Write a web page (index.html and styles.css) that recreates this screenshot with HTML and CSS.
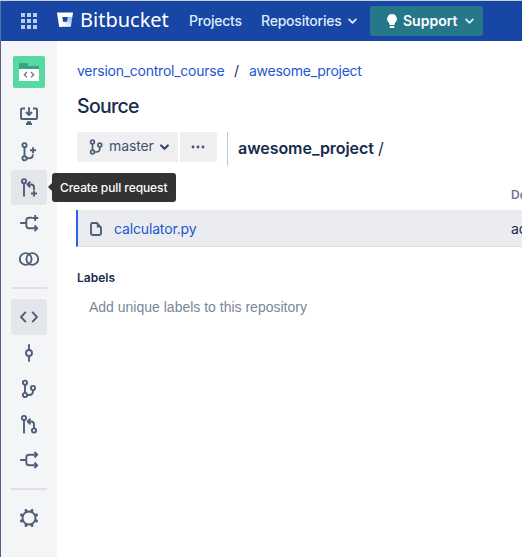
FILE: index.html
```html
<!DOCTYPE html>
<html lang="en">
<head>
<meta charset="utf-8">
<title>awesome_project — Bitbucket</title>
<link rel="stylesheet" href="styles.css">
</head>
<body>
<header class="topbar">
  <svg class="apps" viewBox="0 0 16 16"><path d="M0 0h4v4H0zM6 0h4v4H6zM12 0h4v4h-4zM0 6h4v4H0zM6 6h4v4H6zM12 6h4v4h-4zM0 12h4v4H0zM6 12h4v4H6zM12 12h4v4h-4z"/></svg>
  <svg class="bucket" viewBox="0 0 16 15">
    <defs><linearGradient id="fade" x1="1" y1="0.3" x2="0.4" y2="0.9"><stop offset="0" stop-color="#a9bfe9"/><stop offset="1" stop-color="#fff"/></linearGradient></defs>
    <path fill="#fff" d="M.5.5h15a.5.5 0 0 1 .5.6L15.400 5H5.300l.8 4.800L5 14.800H2.800a.7.7 0 0 1-.7-.6L0 1.100A.5.5 0 0 1 .5.500z"/>
    <path fill="url(#fade)" d="M15.400 5h-4.600L10 9.800H6.100L2.300 14.500l.5.3h10.500a.6.6 0 0 0 .6-.6z"/>
  </svg>
  <span class="brand">Bitbucket</span>
  <a class="nav projects">Projects</a>
  <a class="nav repos">Repositories</a>
  <svg class="chev nav-chev" viewBox="0 0 8 6"><path d="M1 1.200l3 3 3-3"/></svg>
  <button class="support">
    <svg class="bulb" viewBox="0 0 10 14"><path d="M5 0a4.900 4.900 0 0 0-2.900 8.800L2.600 11h4.800l.5-2.200A4.900 4.900 0 0 0 5 0zM2.700 12h4.600v1.200a.8.8 0 0 1-.8.8h-3a.8.8 0 0 1-.8-.8z"/></svg>
    <span class="support-text">Support</span>
    <svg class="chev" viewBox="0 0 8 6"><path d="M1 1.200l3 3 3-3"/></svg>
  </button>
</header>
<div class="shell">
  <nav class="sidebar">
    <svg class="avatar" viewBox="0 0 32 32">
      <rect width="32" height="32" rx="2" fill="#57d9a3"/>
      <path fill="#3ca37f" d="M6 8a1 1 0 0 1 1-1h7a1 1 0 0 1 1 1v2h11v4H6z"/>
      <path fill="#fff" d="M6 13h20v12H6z"/>
      <path fill="none" stroke="#66758f" stroke-width="1.300" d="M14 16l-2.700 2.700 2.700 2.700M18 16l2.700 2.700-2.700 2.700"/>
    </svg>
    <a class="item"><svg viewBox="0 0 24 24"><path d="M8 4.500H5a1 1 0 0 0-1 1V14a1 1 0 0 0 1 1h14a1 1 0 0 0 1-1V5.500a1 1 0 0 0-1-1h-3M12 3.200V11M9 8l3 3 3-3M10 18.200h4M9 20h6"/></svg></a>
    <a class="item"><svg viewBox="0 0 24 24"><circle cx="7.500" cy="5.200" r="2.100"/><circle cx="7.500" cy="18.300" r="2.100"/><path d="M7.500 7.300v9M9.600 18.300h2.400q3.600 0 4-4M16 7.300v6M13 10.300h6"/></svg></a>
    <a class="item short active"><svg viewBox="0 0 24 24"><circle cx="7" cy="5.200" r="2.100"/><path d="M7 7.300v13.200M11 8.500h3q3 0 3 3v2.500M13.200 5.700l-2.800 2.800 2.800 2.800M17 14.500v6M14 17.500h6"/></svg></a>
    <a class="item"><svg viewBox="0 0 24 24"><path d="M3.200 12H9M15 6.700h-3q-2.700 0-2.700 2.700v5.200q0 2.700 2.700 2.700h8M18.200 4v6M15.200 7h6M17.500 14.500l2.800 2.800-2.800 2.800"/></svg></a>
    <a class="item"><svg viewBox="0 0 24 24"><circle cx="8.700" cy="12" r="5.900"/><circle cx="15.300" cy="12" r="5.900"/></svg></a>
    <hr class="rule">
    <a class="item active"><svg viewBox="0 0 24 24"><path d="M8.800 6.800L4 12l4.800 5.200M15.200 6.800L20 12l-4.800 5.200"/></svg></a>
    <a class="item"><svg viewBox="0 0 24 24"><circle cx="12" cy="12" r="3"/><path d="M12 3.200V9M12 15v5.800"/></svg></a>
    <a class="item"><svg viewBox="0 0 24 24"><circle cx="8" cy="5.700" r="2.100"/><circle cx="8" cy="18" r="2.100"/><circle cx="16" cy="11" r="2.100"/><path d="M8 7.800V16M10 18h2q4 0 4-4v-1"/></svg></a>
    <a class="item short"><svg viewBox="0 0 24 24"><circle cx="7" cy="5" r="2.100"/><circle cx="17" cy="17.500" r="2.100"/><path d="M7 7v13.500M11 8.500h3q3 0 3 3v4M13.500 5.700l-2.800 2.800 2.800 2.800"/></svg></a>
    <a class="item"><svg viewBox="0 0 24 24"><path d="M3.200 12H9M20 6.700h-8q-2.700 0-2.700 2.700v5.200q0 2.700 2.700 2.700h8M17.500 3.900l2.800 2.800-2.800 2.800M17.500 14.500l2.800 2.800-2.800 2.800"/></svg></a>
    <hr class="rule">
    <a class="item"><svg viewBox="0 0 24 24"><circle cx="12" cy="12" r="6.500"/><path class="teeth" d="M14.700 5.300l.3-.8M18.700 9.300l.8-.3M18.700 14.700l.8.3M14.700 18.700l.3.800M9.300 18.700l-.3.800M5.300 14.700l-.8.3M5.300 9.300L4.500 9M9.300 5.300L9 4.500"/></svg></a>
    <div class="tooltip">Create pull request</div>
  </nav>
  <main class="content">
    <div class="crumbs"><a class="crumb-a">version_control_course</a><span class="slash">/</span><a class="crumb-b">awesome_project</a></div>
    <h1 class="title">Source</h1>
    <div class="tools">
      <button class="branch">
        <svg class="branch-icon" viewBox="0 0 14 16"><circle cx="3.500" cy="3" r="1.900"/><circle cx="3.500" cy="13" r="1.900"/><circle cx="10.800" cy="6" r="1.900"/><path d="M3.500 5v6M5.500 13h1.800q3.500 0 3.500-3.500V8"/></svg>
        <span class="branch-name">master</span>
        <svg class="chev dark" viewBox="0 0 8 6"><path d="M1 1.200l3 3 3-3"/></svg>
      </button>
      <button class="more"><svg viewBox="0 0 14 4"><circle cx="2" cy="2" r="1.400"/><circle cx="7" cy="2" r="1.400"/><circle cx="12" cy="2" r="1.400"/></svg></button>
      <div class="path"><b class="path-name">awesome_project</b><span>/</span></div>
    </div>
    <div class="table">
      <div class="row head"><span></span><span class="cell">Description</span></div>
      <div class="row file">
        <span class="name"><svg class="doc" viewBox="0 0 12 14"><path d="M7 1H2.500A1.500 1.500 0 0 0 1 2.500v9A1.500 1.500 0 0 0 2.500 13h7a1.500 1.500 0 0 0 1.500-1.500V5.500z"/><path class="fold" d="M6.800.500L11.500 5.500H6.800z"/></svg><a class="filename">calculator.py</a></span>
        <span class="cell">added</span>
      </div>
    </div>
    <h2 class="labels">Labels</h2>
    <p class="hint">Add unique labels to this repository</p>
  </main>
</div>
</body>
</html>
```
FILE: styles.css
```css
* { box-sizing: border-box; }
body {
  margin: 0;
  height: 557px;
  overflow: hidden;
  font-family: Inter, "Liberation Sans", sans-serif;
  font-size: 14px;
  line-height: 20px;
  color: #172b4d;
  background: #fff;
  border-top: 1px solid #cbd0d8;
}
svg { display: block; flex: none; }
button { font: inherit; border: 0; padding: 0; color: inherit; }
.topbar {
  height: 40px;
  display: flex;
  align-items: center;
  padding-left: 20px;
  border-left: 1px solid #5570ad;
  background: #1846a5;
  color: #deebff;
  white-space: nowrap;
}
.apps { width: 16px; height: 16px; fill: #b9cbee; }
.bucket { width: 16px; height: 15px; margin: 0 7px 3px 20px; }
.brand {
  width: 109px;
  font-family: "Noto Sans", sans-serif;
  font-size: 20px;
  color: #fff;
  margin-top: -3px;
}
.nav { font-weight: 500; letter-spacing: -0.22px; }
.projects { width: 72px; }
.repos { width: 87px; }
.chev { width: 9px; height: 7px; fill: none; stroke: #deebff; stroke-width: 1.600; stroke-linecap: round; stroke-linejoin: round; }
.support {
  display: flex;
  align-items: center;
  width: 113px;
  height: 30px;
  margin-left: 13px;
  padding-left: 17px;
  border-radius: 3px;
  background: #27778b;
  color: #fff;
  font-weight: 600;
}
.bulb { width: 10px; height: 14px; fill: #fff; margin-right: 6px; }
.support-text { width: 62px; text-align: left; }
.shell { display: flex; height: 516px; }
.sidebar {
  position: relative;
  width: 57px;
  padding: 15px 0 0 10px;
  border-left: 1px solid #55618d;
  background: #f4f5f7;
}
.avatar { width: 32px; height: 32px; margin: 0 0 10px 2px; }
.item {
  display: flex;
  align-items: center;
  justify-content: center;
  width: 36px;
  height: 36px;
  border-radius: 3px;
}
.item.short { height: 35px; }
.item.active { background: #e4e6ea; }
.item svg { width: 24px; height: 24px; fill: none; stroke: #505f79; stroke-width: 1.900; stroke-linejoin: round; }
.item .teeth { stroke-width: 3; stroke-linecap: round; }
.rule { width: 36px; height: 2px; margin: 10px 0; border: 0; background: #dfe1e6; }
.tooltip {
  position: absolute;
  left: 51px;
  top: 132px;
  width: 124px;
  height: 29px;
  padding-left: 8px;
  border-radius: 3px;
  background: #333;
  color: #fff;
  font-size: 12px;
  line-height: 29px;
  font-weight: 500;
  letter-spacing: -0.08px;
  white-space: nowrap;
}
.tooltip::before {
  content: "";
  position: absolute;
  left: -4px;
  top: 10px;
  border: 4px solid transparent;
  border-left: 0;
  border-right-color: #333;
}
.content { flex: 1; min-width: 0; padding: 20px 0 0 20px; }
.crumbs { display: flex; color: #2257cf; letter-spacing: -0.25px; }
.crumb-a { width: 157px; }
.slash { width: 15px; color: #172b4d; }
.title { margin: 13px 0 14px; font-size: 19.500px; line-height: 24px; font-weight: 500; letter-spacing: -0.700px; }
.tools { display: flex; height: 34px; }
.branch, .more { display: flex; align-items: center; height: 30px; background: #efeff1; color: #42526e; }
.branch { width: 101px; padding-left: 12px; border-radius: 3px 0 0 3px; }
.branch-icon { width: 14px; height: 16px; margin-right: 6px; fill: none; stroke: #505f79; stroke-width: 1.700; }
.branch-name { width: 51px; text-align: left; margin-top: -2px; letter-spacing: -0.1px; }
.chev.dark { stroke: #344563; stroke-width: 1.900; }
.more { width: 37px; margin-left: 2px; justify-content: center; border-radius: 0 3px 3px 0; }
.more svg { width: 14px; height: 4px; fill: #42526e; margin: 0 2px 1px 0; }
.path {
  display: flex;
  margin-left: 10px;
  padding: 6px 0 0 10px;
  border-left: 1px solid #c4c7cd;
  font-size: 16px;
}
.path-name { width: 140px; font-weight: 600; letter-spacing: -0.05px; }
.table { margin-left: -1px; }
.row { display: grid; grid-template-columns: 435px 1fr; align-items: center; white-space: nowrap; }
.cell { overflow: hidden; }
.head { height: 44px; padding-top: 13px; font-size: 12px; font-weight: 600; color: #6b778c; }
.file { height: 37px; padding-top: 2px; border-bottom: 1px solid #dcdee3; border-left: 2px solid #2962f0; background: #ebecf0; grid-template-columns: 433px 1fr; }
.name { display: flex; align-items: center; padding-left: 12px; }
.doc { width: 12px; height: 14px; margin-right: 12px; fill: none; stroke: #505f79; stroke-width: 1.900; }
.doc .fold { fill: #505f79; stroke: none; }
.filename { color: #2257cf; letter-spacing: -0.15px; }
.labels { margin: 21px 0 0; font-size: 12px; line-height: 20px; font-weight: 600; }
.hint { margin: 9px 0 0 12px; font-family: "Liberation Sans", sans-serif; color: #7a869a; }
```
